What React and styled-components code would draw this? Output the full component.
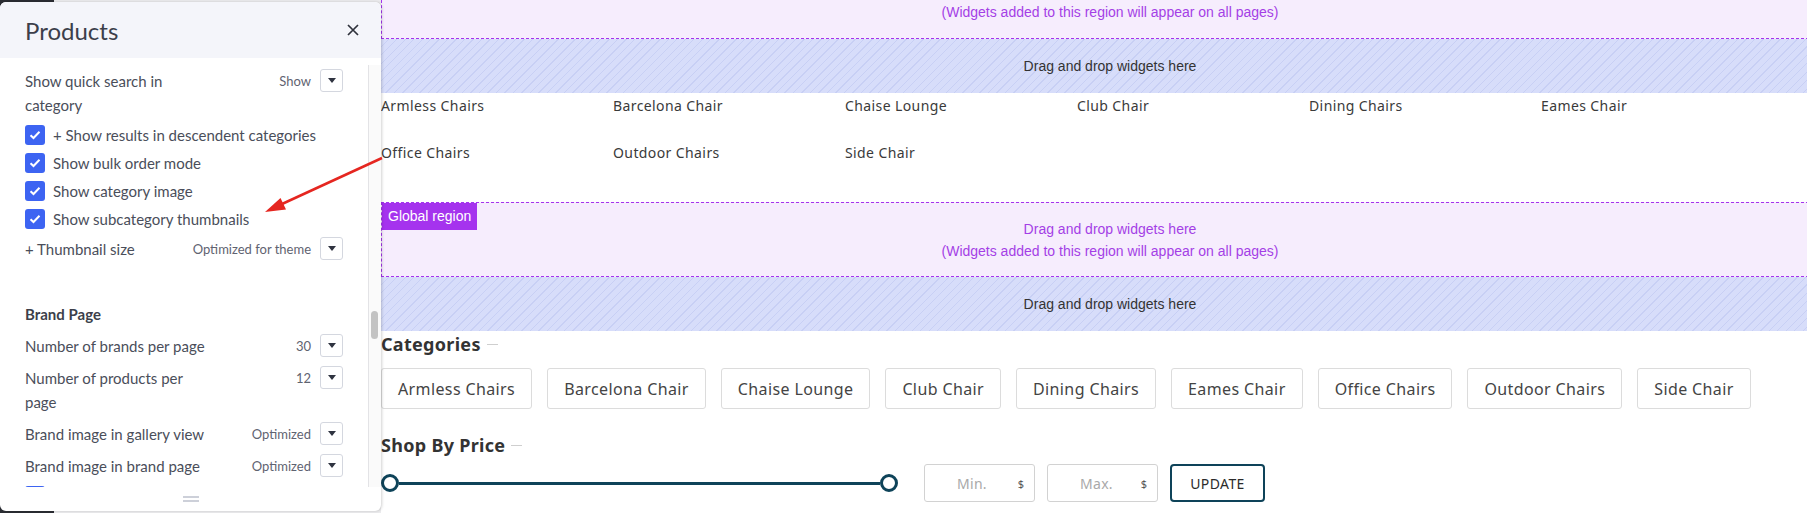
import React from "react";
import styled, { createGlobalStyle } from "styled-components";

const GlobalStyle = createGlobalStyle`
  html, body {
    margin: 0;
    padding: 0;
    background: #fff;
    overflow: hidden;
  }
  * { box-sizing: border-box; }
`;

const Page = styled.div`
  position: relative;
  display: flex;
  width: 1807px;
  height: 513px;
  overflow: hidden;
  background: #fff;
`;

/* ---------- side panel ---------- */

const PanelDock = styled.div`
  position: relative;
  z-index: 2;
  flex: none;
  width: 381px;
  height: 513px;
  padding: 2px 0;
  background: linear-gradient(90deg, #2b2d33 0 54px, #ececee 54px);
`;

const Panel = styled.div`
  display: flex;
  flex-direction: column;
  height: 100%;
  background: #fff;
  border-radius: 6px;
  overflow: hidden;
  box-shadow: 1px 0 3px rgba(0, 0, 0, 0.18);
  font-family: Lato, "Noto Sans", sans-serif;
`;

const PanelHeader = styled.div`
  flex: none;
  display: flex;
  align-items: center;
  justify-content: space-between;
  height: 56px;
  padding: 0 22px 0 25px;
  background: #f4f5fa;
`;

const PanelTitle = styled.h1`
  margin: 0;
  font-size: 24px;
  font-weight: 400;
  color: #3c3f4a;
`;

const CloseButton = styled.button`
  display: flex;
  padding: 0;
  border: none;
  background: none;
`;

const PanelBody = styled.div`
  flex: 1;
  display: flex;
  min-height: 0;
`;

const Settings = styled.div`
  flex: 1;
  display: flex;
  flex-direction: column;
  gap: 8px;
  padding: 11px 25px 0;
  overflow: hidden;
`;

const ScrollTrack = styled.div`
  flex: none;
  width: 13px;
  margin-top: 7px;
  background: #fafafa;
  border-left: 1px solid #e3e3e6;
`;

const ScrollThumb = styled.div`
  width: 7px;
  height: 28px;
  margin: 246px 0 0 2px;
  border-radius: 4px;
  background: #c3c3c3;
`;

const PanelFooter = styled.div`
  flex: none;
  height: 24px;
  display: flex;
  align-items: center;
  justify-content: center;
`;

const DragHandle = styled.div`
  width: 16px;
  height: 6px;
  border-top: 2px solid #cdd0d9;
  border-bottom: 2px solid #cdd0d9;
`;

const SettingRow = styled.div`
  flex: none;
  display: flex;
  align-items: flex-start;
  justify-content: space-between;
`;

const SettingLabel = styled.div`
  max-width: 188px;
  font-size: 15px;
  line-height: 24px;
  color: #4a4e5a;
`;

const SettingControl = styled.div`
  display: flex;
  align-items: center;
  gap: 9px;
  height: 23px;
`;

const SettingValue = styled.span`
  font-size: 13px;
  color: #5f6371;
`;

const SelectBox = styled.div`
  display: flex;
  align-items: center;
  justify-content: center;
  width: 23px;
  height: 23px;
  border: 1px solid #d4d7df;
  border-radius: 3px;
  background: #fff;

  &::after {
    content: "";
    border-left: 4px solid transparent;
    border-right: 4px solid transparent;
    border-top: 5px solid #2f3340;
  }
`;

const CheckRow = styled.label`
  flex: none;
  display: flex;
  align-items: center;
  gap: 8px;
  height: 20px;
  font-size: 15px;
  color: #4a4e5a;
`;

const CheckBox = styled.span`
  flex: none;
  display: flex;
  align-items: center;
  justify-content: center;
  width: 20px;
  height: 20px;
  border-radius: 3px;
  background: #3d64f2;
`;

const SectionTitle = styled.h3`
  margin: 33px 0 0;
  font-size: 15px;
  font-weight: 700;
  line-height: 24px;
  color: #3c3f4a;
`;

function Check() {
  return (
    <CheckBox>
      <svg width="12" height="10" viewBox="0 0 12 10">
        <path d="M1.5 5.2 4.5 8 10.5 1.8" fill="none" stroke="#fff" strokeWidth="2" />
      </svg>
    </CheckBox>
  );
}

function Setting({ label, value }) {
  return (
    <SettingRow>
      <SettingLabel>{label}</SettingLabel>
      <SettingControl>
        <SettingValue>{value}</SettingValue>
        <SelectBox />
      </SettingControl>
    </SettingRow>
  );
}

/* ---------- page builder canvas ---------- */

const Canvas = styled.div`
  flex: none;
  display: flex;
  flex-direction: column;
  width: 1458px;
  font-family: "Noto Sans", sans-serif;
  color: #333;
`;

// the top region is scrolled, only its lower part is in view
const Region = styled.div`
  position: relative;
  height: ${(p) => (p.$tail ? 39 : 75)}px;
  padding: ${(p) => (p.$tail ? "1px 0 0" : "15px 0 14px")};
  border: 1px dashed #a533ee;
  border-top-width: ${(p) => (p.$tail ? 0 : 1)}px;
  background: #f6edfd;
  text-align: center;
  font-family: "Liberation Sans", Arial, sans-serif;
  font-size: 14px;
  line-height: 22px;
  color: #a43fe6;
`;

const RegionBadge = styled.span`
  position: absolute;
  top: 0;
  left: 0;
  height: 27px;
  padding: 0 6px;
  background: #a533ee;
  color: #fff;
  line-height: 27px;
`;

const DropZone = styled.div`
  display: flex;
  align-items: center;
  justify-content: center;
  height: 54px;
  background-color: #d7ddfa;
  background-image: repeating-linear-gradient(
    135deg,
    transparent 0 5px,
    rgba(160, 172, 230, 0.28) 5px 6px
  );
  font-family: "Liberation Sans", Arial, sans-serif;
  font-size: 14px;
  color: #333;
`;

const LinkGrid = styled.div`
  display: grid;
  grid-template-columns: repeat(6, 232px);
  row-gap: 26px;
  padding-top: 2px;
  margin-bottom: 39px;
`;

const CategoryLink = styled.a`
  font-size: 14px;
  letter-spacing: 0.4px;
  line-height: 21px;
  color: #3a3a3a;
  text-decoration: none;
`;

const Heading = styled.h2`
  display: flex;
  align-items: center;
  margin: ${(p) => p.$top || 0}px 0 0;
  font-size: 18px;
  font-weight: 700;
  letter-spacing: 0.3px;
  line-height: 26px;
  color: #333;

  &::after {
    content: "";
    width: 11px;
    height: 1px;
    margin-left: 6px;
    background: #cfcfcf;
  }
`;

const ChipRow = styled.div`
  display: flex;
  gap: 15px;
  margin-top: 11px;
`;

const Chip = styled.a`
  display: flex;
  align-items: center;
  height: 41px;
  padding: 0 16px;
  border: 1px solid #dcdcdc;
  border-radius: 3px;
  font-size: 16px;
  letter-spacing: 0.38px;
  color: #444;
  text-decoration: none;
`;

const PriceRow = styled.div`
  display: flex;
  align-items: center;
  margin-top: 6px;
  height: 38px;
`;

const Slider = styled.div`
  display: flex;
  align-items: center;
  width: 517px;
  margin-right: 26px;
`;

const Knob = styled.span`
  flex: none;
  width: 18px;
  height: 18px;
  border: 3px solid #0e4359;
  border-radius: 50%;
  background: #fff;
`;

const Rail = styled.span`
  flex: 1;
  height: 3px;
  background: #0e4359;
`;

const PriceInput = styled.div`
  display: flex;
  align-items: center;
  width: 111px;
  height: 38px;
  margin-right: 12px;
  padding: 0 10px 0 32px;
  border: 1px solid #d2d2d2;
  border-radius: 3px;
`;

const Placeholder = styled.span`
  flex: 1;
  font-size: 14px;
  letter-spacing: 0.3px;
  color: #a9a9a9;
`;

const Currency = styled.span`
  font-size: 11px;
  color: #555;
`;

const UpdateButton = styled.button`
  width: 95px;
  height: 38px;
  border: 2px solid #0e4359;
  border-radius: 4px;
  background: #fff;
  font-family: "Noto Sans", sans-serif;
  font-size: 14px;
  letter-spacing: 0.4px;
  color: #2b2b2b;
`;

const Annotation = styled.svg`
  position: absolute;
  top: 0;
  left: 0;
  z-index: 5;
  pointer-events: none;
`;

const categories = [
  "Armless Chairs",
  "Barcelona Chair",
  "Chaise Lounge",
  "Club Chair",
  "Dining Chairs",
  "Eames Chair",
  "Office Chairs",
  "Outdoor Chairs",
  "Side Chair",
];

const allPagesNote = "(Widgets added to this region will appear on all pages)";

export default function App() {
  return (
    <>
      <GlobalStyle />
      <Page>
        <PanelDock>
          <Panel>
            <PanelHeader>
              <PanelTitle>Products</PanelTitle>
              <CloseButton>
                <svg width="12" height="12" viewBox="0 0 12 12">
                  <path d="M1 1 11 11M11 1 1 11" stroke="#2f323c" strokeWidth="1.7" />
                </svg>
              </CloseButton>
            </PanelHeader>
            <PanelBody>
              <Settings>
                <Setting label="Show quick search in category" value="Show" />
                <CheckRow><Check />+ Show results in descendent categories</CheckRow>
                <CheckRow><Check />Show bulk order mode</CheckRow>
                <CheckRow><Check />Show category image</CheckRow>
                <CheckRow><Check />Show subcategory thumbnails</CheckRow>
                <Setting label="+ Thumbnail size" value="Optimized for theme" />
                <SectionTitle>Brand Page</SectionTitle>
                <Setting label="Number of brands per page" value="30" />
                <Setting label="Number of products per page" value="12" />
                <Setting label="Brand image in gallery view" value="Optimized" />
                <Setting label="Brand image in brand page" value="Optimized" />
                <CheckRow><Check /></CheckRow>
              </Settings>
              <ScrollTrack>
                <ScrollThumb />
              </ScrollTrack>
            </PanelBody>
            <PanelFooter>
              <DragHandle />
            </PanelFooter>
          </Panel>
        </PanelDock>

        <Canvas>
          <Region $tail>
            <div>{allPagesNote}</div>
          </Region>
          <DropZone>Drag and drop widgets here</DropZone>
          <LinkGrid>
            {categories.map((name) => (
              <CategoryLink key={name} href="#">{name}</CategoryLink>
            ))}
          </LinkGrid>
          <Region>
            <RegionBadge>Global region</RegionBadge>
            <div>Drag and drop widgets here</div>
            <div>{allPagesNote}</div>
          </Region>
          <DropZone>Drag and drop widgets here</DropZone>

          <Heading>Categories</Heading>
          <ChipRow>
            {categories.map((name) => (
              <Chip key={name} href="#">{name}</Chip>
            ))}
          </ChipRow>

          <Heading $top={23}>Shop By Price</Heading>
          <PriceRow>
            <Slider>
              <Knob />
              <Rail />
              <Knob />
            </Slider>
            <PriceInput>
              <Placeholder>Min.</Placeholder>
              <Currency>$</Currency>
            </PriceInput>
            <PriceInput>
              <Placeholder>Max.</Placeholder>
              <Currency>$</Currency>
            </PriceInput>
            <UpdateButton>UPDATE</UpdateButton>
          </PriceRow>
        </Canvas>

        <Annotation width="1807" height="513">
          <line x1="382" y1="158" x2="282" y2="204" stroke="#e52620" strokeWidth="2.5" />
          <polygon points="265,212 286,209.5 280.5,198" fill="#e52620" />
        </Annotation>
      </Page>
    </>
  );
}
